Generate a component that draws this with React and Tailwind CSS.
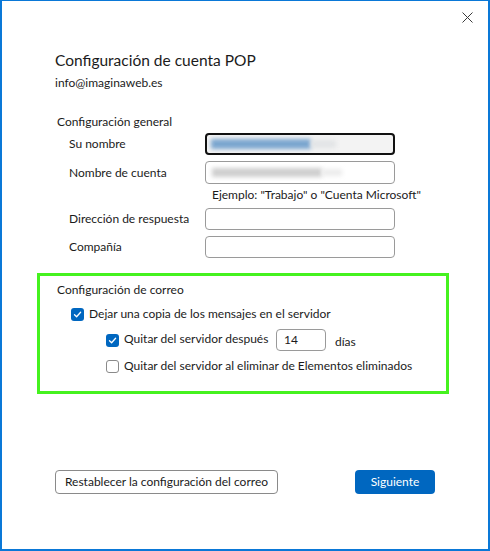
import React from 'react';

const Check = ({ checked }) => (
    checked ? (
        <span className="w-[13px] h-[13px] rounded-[3px] bg-[#0067c0] flex items-center justify-center shrink-0">
            <svg width="9" height="9" viewBox="0 0 9 9" fill="none">
                <path d="M1.5 4.8 L3.6 6.8 L7.6 2.3" stroke="white" strokeWidth="1.3" strokeLinecap="round" strokeLinejoin="round" />
            </svg>
        </span>
    ) : (
        <span className="w-[13px] h-[13px] rounded-[3px] border border-[#8a8a8a] bg-white shrink-0"></span>
    )
);

const FieldRow = ({ label, children, className = '' }) => (
    <div className={`flex items-center h-[22px] ${className}`}>
        <div className="w-[148px] pl-[12px] whitespace-nowrap">{label}</div>
        {children}
    </div>
);

const App = () => {
    return (
        <div className="w-[490px] h-[551px] bg-white border-l-2 border-r-2 border-b-2 border-t border-[#0a78d7] relative text-[12px] leading-[16px] text-[#1b1b1b] font-['Lato',sans-serif] overflow-hidden">
            {/* Close */}
            <button className="absolute top-[10px] left-[459px] w-[12px] h-[12px] flex items-center justify-center">
                <svg width="11" height="11" viewBox="0 0 11 11">
                    <path d="M0.5 0.5 L10.5 10.5 M10.5 0.5 L0.5 10.5" stroke="#3b3b3b" strokeWidth="1" />
                </svg>
            </button>

            <div className="pl-[53px] pt-[49px]">
                <h1 className="text-[15.5px] leading-[20px]">Configuración de cuenta POP</h1>
                <p className="mt-[5px]">info@imaginaweb.es</p>

                {/* General */}
                <div className="mt-[23px] pl-[2px]">
                    <p>Configuración general</p>
                    <FieldRow label="Su nombre" className="mt-[3px]">
                        <div className="w-[190px] h-[22px] rounded-[4px] border-2 border-[#111] bg-[#f3f3f3] overflow-hidden flex items-center pl-[4px]">
                            <div className="w-[100px] h-[10px] bg-[#7ba6cf] blur-[2px]"></div>
                            <div className="w-[25px] h-[8px] bg-[#e2e4e6] blur-[2px]"></div>
                        </div>
                    </FieldRow>
                    <FieldRow label="Nombre de cuenta" className="mt-[6px] h-[23px]">
                        <div className="w-[190px] h-[23px] rounded-[4px] border border-[#9a9a9a] bg-white overflow-hidden flex items-center pl-[6px]">
                            <div className="w-[110px] h-[9px] bg-[#cfcfcf] blur-[2px]"></div>
                            <div className="w-[20px] h-[7px] bg-[#ececec] blur-[2px]"></div>
                        </div>
                    </FieldRow>
                    <p className="pl-[155px] mt-[3px] h-[19px]">Ejemplo: "Trabajo" o "Cuenta Microsoft"</p>
                    <FieldRow label="Dirección de respuesta" className="mt-[2px]">
                        <div className="w-[190px] h-[22px] rounded-[4px] border border-[#9a9a9a] bg-white"></div>
                    </FieldRow>
                    <FieldRow label="Compañía" className="mt-[6px]">
                        <div className="w-[190px] h-[22px] rounded-[4px] border border-[#9a9a9a] bg-white"></div>
                    </FieldRow>
                </div>
            </div>

            {/* Mail settings */}
            <div className="ml-[35px] mt-[15px] w-[412px] h-[121px] border-[3px] border-[#45f21f] pl-[17px] pt-[6px]">
                <p>Configuración de correo</p>
                <div className="flex items-center gap-[5px] pl-[14px] mt-[7px] h-[18px]">
                    <Check checked />
                    <span>Dejar una copia de los mensajes en el servidor</span>
                </div>
                <div className="flex items-center pl-[49px] mt-[6px] h-[22px]">
                    <Check checked />
                    <span className="ml-[5px] w-[144px] shrink-0 whitespace-nowrap -mt-[3px]">Quitar del servidor después</span>
                    <div className="ml-[8px] w-[50px] h-[22px] shrink-0 rounded-[4px] border border-[#9a9a9a] flex items-center pl-[7px]">14</div>
                    <span className="ml-[9px] mt-[4px]">días</span>
                </div>
                <div className="flex items-center gap-[5px] pl-[49px] mt-[6px] h-[18px]">
                    <Check />
                    <span>Quitar del servidor al eliminar de Elementos eliminados</span>
                </div>
            </div>

            {/* Buttons */}
            <div className="flex items-center justify-between pl-[53px] pr-[53px] mt-[76px]">
                <button className="h-[24px] w-[223px] rounded-[4px] border border-[#8a8a8a] bg-white text-[12px] leading-[16px] text-[#1b1b1b]">
                    Restablecer la configuración del correo
                </button>
                <button className="h-[24px] w-[80px] rounded-[4px] bg-[#0067c0] text-white text-[12px] leading-[16px]">
                    Siguiente
                </button>
            </div>
        </div>
    );
};

export default App;
